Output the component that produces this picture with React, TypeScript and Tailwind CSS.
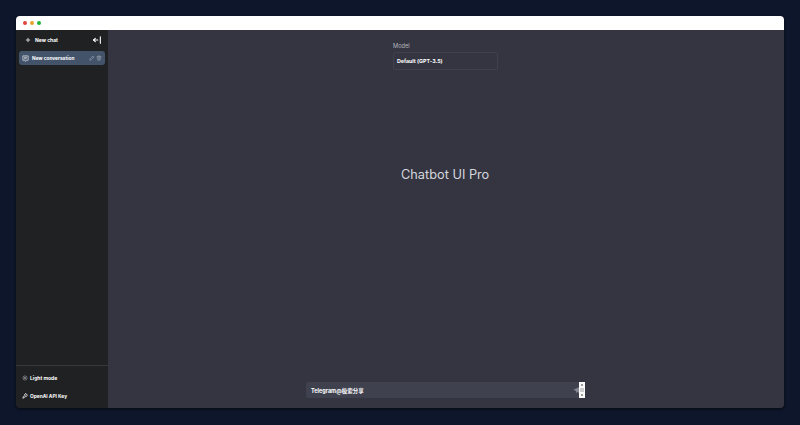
import React from "react";
import {
  TbPlus,
  TbArrowBarLeft,
  TbPencil,
  TbTrash,
  TbSun,
  TbKey,
} from "react-icons/tb";

function TitleBar() {
  return (
    <header className="flex h-[14px] shrink-0 items-center gap-[3px] bg-white pl-[7px]">
      <span className="size-1 rounded-full bg-[#e0443e]" />
      <span className="size-1 rounded-full bg-[#e5a52c]" />
      <span className="size-1 rounded-full bg-[#1fb53a]" />
    </header>
  );
}

function MessageIcon() {
  return (
    <svg
      viewBox="0 0 24 24"
      className="size-[7px] shrink-0 text-[#e6eaf0]"
      fill="none"
      stroke="currentColor"
      strokeWidth="2.4"
      strokeLinejoin="round"
      strokeLinecap="round"
    >
      <path d="M12 21l-3-3H3V3h18v15h-6l-3 3" />
      <path d="M8 8h8M8 13h6" />
    </svg>
  );
}

function SendIcon() {
  return (
    <svg viewBox="0 0 12 12" className="size-[8px] shrink-0 text-[#858690]" fill="currentColor">
      <path d="M0.5 5.6 11.5 0.8 9.6 11.2 6.4 8.6 5 10.8 4.4 7.4z" />
    </svg>
  );
}

function Sidebar() {
  return (
    <aside className="flex w-[92px] shrink-0 flex-col bg-[#202123] text-[5.1px] leading-[7px] font-bold text-white">
      <div className="mt-[3px] flex h-[14px] items-center pr-[6px] pl-[9px]">
        <TbPlus size={6} strokeWidth={3} className="shrink-0" />
        <span className="ml-1 flex-1 pt-px text-[5px]">New chat</span>
        <TbArrowBarLeft size={10} strokeWidth={2.6} className="shrink-0" />
      </div>
      <div className="mx-[3px] mt-1 flex h-[14px] items-center rounded-[3px] bg-[#435369] pr-[3px] pl-[3px]">
        <MessageIcon />
        <span className="ml-[3px] flex-1 pt-px text-[4.8px] whitespace-nowrap">New conversation</span>
        <TbPencil size={6} className="mr-px shrink-0 text-[#a1aab8]" />
        <TbTrash size={6} className="shrink-0 text-[#a1aab8]" />
      </div>
      <footer className="mt-auto flex h-[43px] flex-col border-t border-[#36383c] pt-[3px] pl-[6px]">
        <div className="flex h-[18px] items-center gap-[2px]">
          <TbSun size={6} strokeWidth={3} className="shrink-0 text-[#a7a8aa]" />
          <span className="pt-px text-[5px]">Light mode</span>
        </div>
        <div className="flex h-[18px] items-center gap-[2px]">
          <TbKey size={6} strokeWidth={3} className="shrink-0" />
          <span className="pt-px text-[4.85px]">OpenAI API Key</span>
        </div>
      </footer>
    </aside>
  );
}

function Composer() {
  return (
    <div className="ml-[198px] flex h-4 w-[279px] items-center rounded-[2px] bg-[#40414f] pl-[5px] text-white">
      <span className="flex-1 pt-[2px] text-[5.5px] leading-[7px] font-bold">
        Telegram@极索分享
      </span>
      <SendIcon />
      <div className="-ml-[2px] flex h-4 w-[6px] flex-col items-center justify-between bg-[#fafafa] py-[2px]">
        <span className="size-[2px] bg-[#9a9a9a]" />
        <span className="h-1 w-[4px] bg-[#cccccc]" />
        <span className="size-[2px] bg-[#9a9a9a]" />
      </div>
    </div>
  );
}

function Chat() {
  return (
    <main className="flex flex-1 flex-col bg-[#343541]">
      <div className="mt-3 ml-[285px] flex w-[105px] flex-col">
        <label className="text-[5.7px] leading-[8px] text-[#b4b5be]">Model</label>
        <div className="mt-[2px] flex h-[18px] items-center rounded-[2px] border border-[#40414c] pt-px pl-[3px] text-[5.3px] leading-[7px] font-bold text-white">
          Default (GPT-3.5)
        </div>
      </div>
      <h1 className="mt-[96px] ml-[293px] pt-px text-[12.75px] leading-4 whitespace-nowrap text-[#d4d5dc]">
        Chatbot UI Pro
      </h1>
      <div className="mt-auto mb-[10px]">
        <Composer />
      </div>
    </main>
  );
}

export default function App() {
  return (
    <div className="h-[425px] w-[800px] bg-[#0d162a] px-4 pt-4 font-['Inter','Noto_Sans_CJK_SC',sans-serif]">
      <div className="flex h-[392px] w-[768px] flex-col overflow-hidden rounded-[4px] shadow-[0_1px_3px_rgba(0,0,0,0.6)]">
        <TitleBar />
        <div className="flex min-h-0 flex-1">
          <Sidebar />
          <Chat />
        </div>
      </div>
    </div>
  );
}
